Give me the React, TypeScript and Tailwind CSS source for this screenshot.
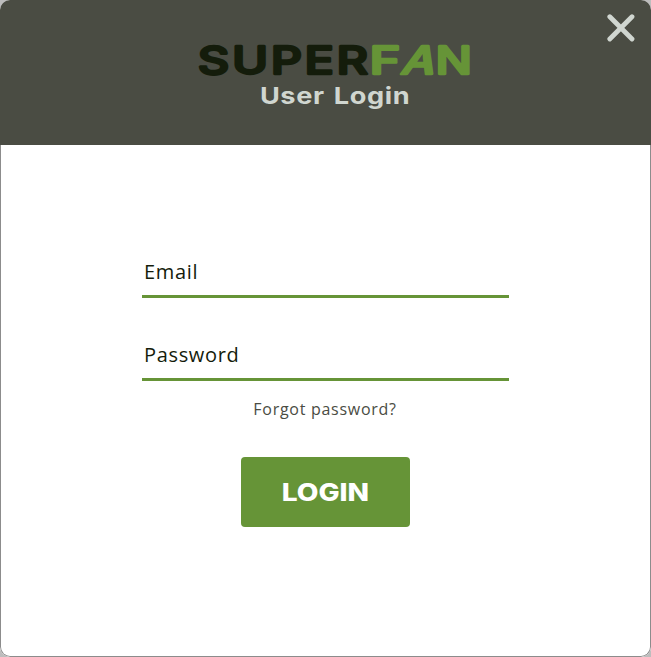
function Logo() {
  return (
    <svg width="276" height="52" viewBox="0 -8 276 52" className="block overflow-visible" role="img" aria-label="Superfan">
      <g fontFamily="Inter, sans-serif" fontWeight="500" fontSize="38.5" strokeWidth="2.4" strokeLinejoin="round">
        <text x="0.8" y="31.3" letterSpacing="2" textLength="173" lengthAdjust="spacingAndGlyphs" fill="#141c0b" stroke="#141c0b">SUPER</text>
        <g fill="#669437" stroke="#669437">
          <text x="172.5" y="31.3" textLength="31" lengthAdjust="spacingAndGlyphs">F</text>
          <text transform="translate(203 31.3) skewX(-17)" textLength="33" lengthAdjust="spacingAndGlyphs">A</text>
          <text x="238.5" y="31.3" textLength="36.5" lengthAdjust="spacingAndGlyphs">N</text>
        </g>
      </g>
    </svg>
  );
}

function Field({ label, type }: { label: string; type: string }) {
  return (
    <input
      type={type}
      placeholder={label}
      aria-label={label}
      className="block h-[53px] w-full border-b-[3px] border-[#669437] bg-transparent px-0.5 pt-0.5 text-[20px] tracking-[0.65px] outline-none placeholder:text-[#141c0b]"
    />
  );
}

export default function App() {
  return (
    <div className="h-[657px] w-[651px] bg-[#bdbdbd] font-['Open_Sans',sans-serif]">
      <div className="flex h-full flex-col overflow-hidden rounded-[10px] bg-white">
        <header className="relative flex h-[145px] shrink-0 flex-col items-center bg-[#4a4c43] pt-[35px]">
          <div className="ml-[19px]"><Logo /></div>
          <h1 className="-mt-[6px] ml-[19px] scale-x-[1.155] whitespace-nowrap font-['Inter',sans-serif] text-[23.5px] font-bold leading-[30px] tracking-[0.5px] text-[#d0d6d0] [word-spacing:2px]">
            User Login
          </h1>
          <button aria-label="Close" className="absolute right-[16px] top-[14px]">
            <svg width="28" height="28" viewBox="0 0 28 28" stroke="#d0d6d0" strokeWidth="4.8" strokeLinecap="round">
              <path d="M2.8 2.8 25 25M25 2.8 2.8 25" />
            </svg>
          </button>
        </header>
        <main className="flex flex-1 flex-col items-center rounded-b-[10px] border border-t-0 border-[#8c8c8c] pt-[100px]">
          <div className="flex w-[367px] flex-col gap-[30px]">
            <Field label="Email" type="email" />
            <Field label="Password" type="password" />
          </div>
          <a className="mr-px mt-[16px] text-[16px] leading-6 tracking-[0.72px] text-[#4a4c43]">Forgot password?</a>
          <button className="mt-9 flex h-[70px] w-[169px] items-center justify-center rounded bg-[#669437] pt-[2px] text-white">
            <span className="scale-x-[1.17] font-['Inter',sans-serif] text-[24px] font-extrabold">LOGIN</span>
          </button>
        </main>
      </div>
    </div>
  );
}
